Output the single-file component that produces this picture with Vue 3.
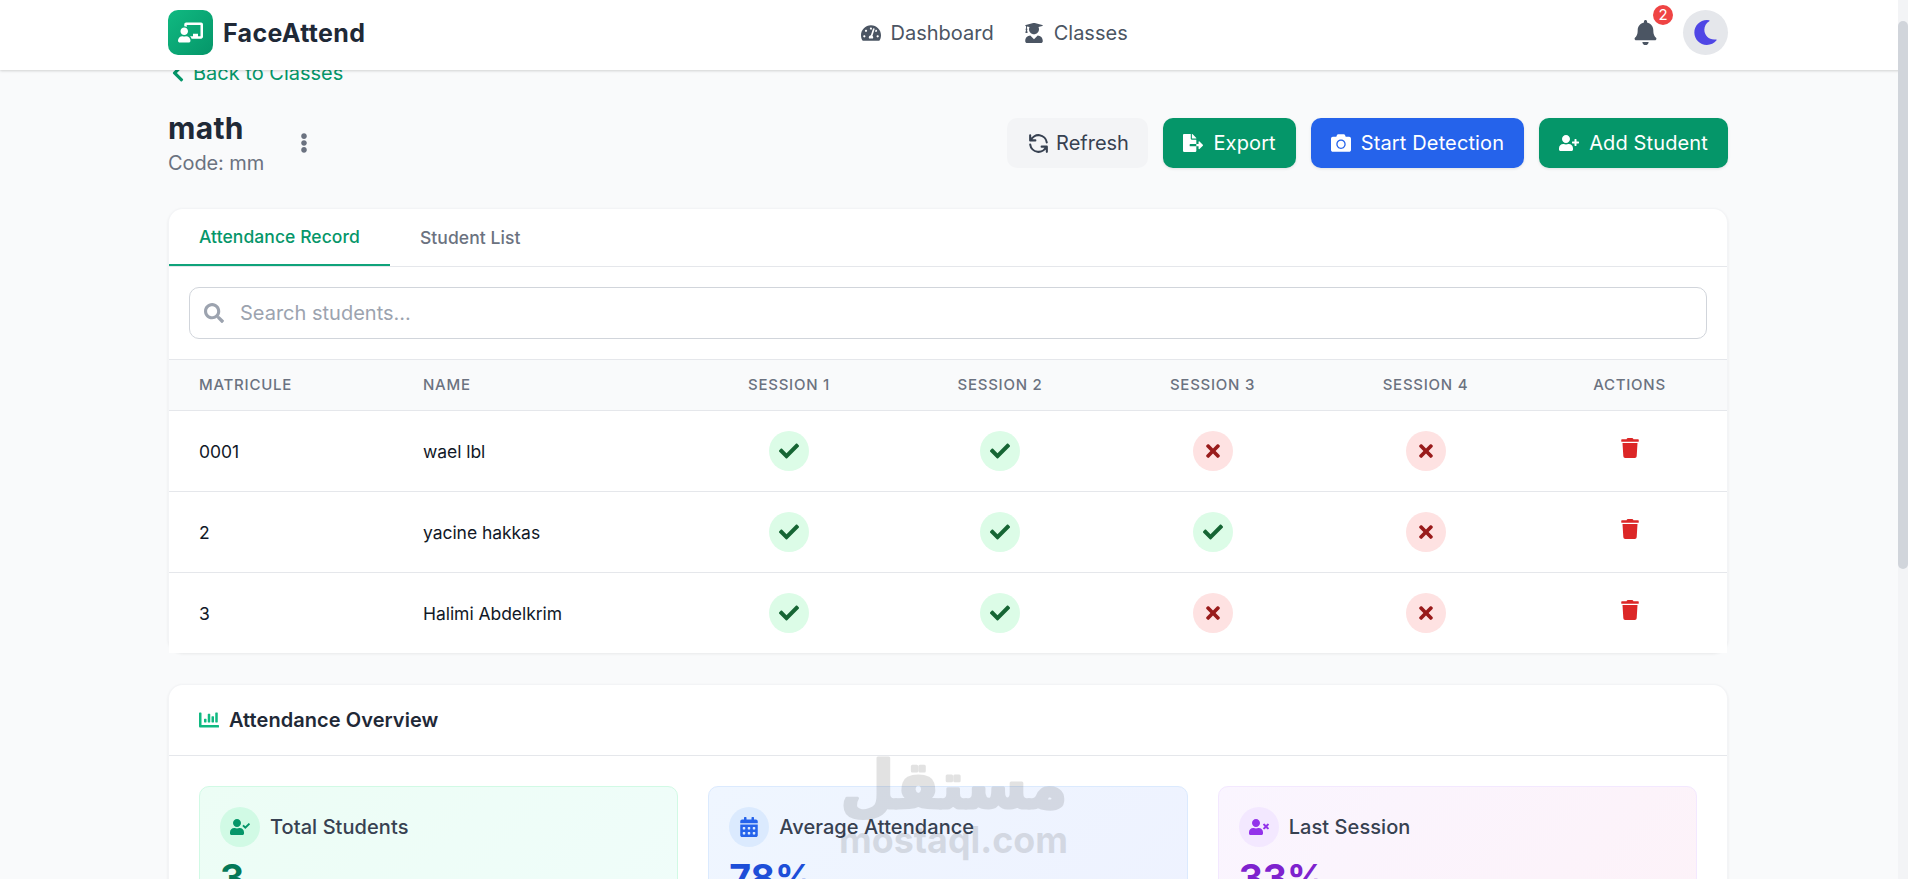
<template>
  <div class="page">
    <header class="navbar">
      <div class="navbar-inner">
        <div class="brand">
          <div class="brand-logo"><Icon name="chalkboard" class="icon-lg" /></div>
          <span class="brand-name">FaceAttend</span>
        </div>

        <nav class="nav-links">
          <a v-for="link in navLinks" :key="link.label" class="nav-link">
            <Icon :name="link.icon" />
            <span>{{ link.label }}</span>
          </a>
        </nav>

        <div class="nav-actions">
          <button class="bell-btn">
            <Icon name="bell" class="icon-lg" />
            <span class="badge">{{ notifications }}</span>
          </button>
          <button class="theme-btn"><Icon name="moon" class="icon-lg" /></button>
        </div>
      </div>
    </header>

    <main class="container">
      <a class="back-link"><Icon name="chevronLeft" /><span>Back to Classes</span></a>

      <div class="title-row">
        <div class="title-left">
          <div>
            <h1>{{ course.name }}</h1>
            <p class="code">Code: {{ course.code }}</p>
          </div>
          <button class="dots-btn"><Icon name="dots" /></button>
        </div>

        <div class="actions">
          <button class="btn btn-refresh">
            <svg class="refresh-icon" viewBox="0 0 24 24" fill="none" stroke="currentColor" stroke-width="2">
              <path
                stroke-linecap="round"
                stroke-linejoin="round"
                d="M4 4v5h.582m15.356 2A8.001 8.001 0 004.582 9m0 0H9m11 11v-5h-.581m0 0a8.003 8.003 0 01-15.357-2m15.357 2H15"
              />
            </svg>
            <span>Refresh</span>
          </button>
          <button class="btn btn-green"><Icon name="fileExport" /><span>Export</span></button>
          <button class="btn btn-blue"><Icon name="camera" /><span>Start Detection</span></button>
          <button class="btn btn-green"><Icon name="userPlus" /><span>Add Student</span></button>
        </div>
      </div>

      <!-- Attendance table -->
      <section class="card">
        <div class="tabs">
          <button
            v-for="tab in tabs"
            :key="tab"
            class="tab"
            :class="{ active: tab === activeTab }"
            @click="activeTab = tab"
          >
            {{ tab }}
          </button>
        </div>

        <div class="search-area">
          <label class="search-box">
            <Icon name="search" />
            <input v-model="query" type="text" placeholder="Search students..." />
          </label>
        </div>

        <table class="records">
          <colgroup>
            <col class="col-id" />
            <col class="col-name" />
            <col v-for="n in 4" :key="n" :class="'col-s' + n" />
            <col />
          </colgroup>
          <thead>
            <tr>
              <th class="left">Matricule</th>
              <th class="left">Name</th>
              <th v-for="n in 4" :key="n">Session {{ n }}</th>
              <th>Actions</th>
            </tr>
          </thead>
          <tbody>
            <tr v-for="student in filteredStudents" :key="student.id">
              <td class="left">{{ student.id }}</td>
              <td class="left">{{ student.name }}</td>
              <td v-for="(present, i) in student.sessions" :key="i">
                <span class="mark" :class="present ? 'present' : 'absent'">
                  <Icon :name="present ? 'check' : 'times'" />
                </span>
              </td>
              <td>
                <button class="delete-btn"><Icon name="trash" /></button>
              </td>
            </tr>
          </tbody>
        </table>
      </section>

      <!-- Overview -->
      <section class="card overview">
        <div class="overview-header">
          <Icon name="chartBar" />
          <h2>Attendance Overview</h2>
        </div>
        <div class="stats">
          <div v-for="stat in stats" :key="stat.label" class="stat" :class="stat.theme">
            <div class="stat-head">
              <span class="stat-icon"><Icon :name="stat.icon" /></span>
              <span class="stat-label">{{ stat.label }}</span>
            </div>
            <div class="stat-value">{{ stat.value }}</div>
          </div>
        </div>
      </section>
    </main>

    <svg class="watermark" viewBox="0 0 240 120">
      <text
        class="wm-ar"
        x="121"
        y="57"
        text-anchor="middle"
        textLength="227"
        lengthAdjust="spacingAndGlyphs"
        direction="rtl"
      >مستقل</text>
      <text class="wm-en" x="6" y="102" textLength="229" lengthAdjust="spacingAndGlyphs">mostaql.com</text>
    </svg>

    <div class="scrollbar"><div class="thumb"></div></div>
  </div>
</template>

<script setup>
import { ref, computed, h } from 'vue'

const person =
  'M224 256c70.7 0 128-57.3 128-128S294.7 0 224 0 96 57.3 96 128s57.3 128 128 128zm89.6 32h-16.7c-22.2 10.2-46.9 16-72.9 16s-50.6-5.8-72.9-16h-16.7C60.2 288 0 348.2 0 422.4V464c0 26.5 21.5 48 48 48h352c26.5 0 48-21.5 48-48v-41.6c0-74.2-60.2-134.4-134.4-134.4z'

// name: [viewBox width, path], every icon is 512 high
const icons = {
  chalkboard: [640, 'M208 352c-2.39 0-4.78.35-7.06 1.09C187.98 357.3 174.35 360 160 360c-14.35 0-27.98-2.7-40.95-6.91-2.28-.74-4.66-1.09-7.05-1.09C49.94 352-.33 402.48 0 464.62.14 490.88 21.73 512 48 512h224c26.27 0 47.86-21.12 48-47.38.33-62.14-49.94-112.62-112-112.62zm-48-32c53.02 0 96-42.98 96-96s-42.98-96-96-96-96 42.98-96 96 42.98 96 96 96zM592 0H208c-26.47 0-48 22.25-48 49.59V96c23.42 0 45.1 6.78 64 17.8V64h352v288h-64v-64H384v64h-76.24c19.1 16.69 33.12 38.73 39.69 64H592c26.47 0 48-22.25 48-49.59V49.59C640 22.25 618.47 0 592 0z'],
  gauge: [576, 'M288 32C128.94 32 0 160.94 0 320c0 52.8 14.25 102.26 39.06 144.8 5.61 9.62 16.3 15.2 27.44 15.2h443c11.14 0 21.83-5.58 27.44-15.2C561.75 422.26 576 372.8 576 320c0-159.06-128.94-288-288-288zm0 64c14.71 0 26.58 10.13 30.32 23.65-1.11 2.26-2.64 4.23-3.45 6.67l-9.22 27.67c-5.13 3.49-10.97 6.01-17.64 6.01-17.67 0-32-14.33-32-32S270.33 96 288 96zM96 384c-17.67 0-32-14.33-32-32s14.33-32 32-32 32 14.33 32 32-14.33 32-32 32zm48-160c-17.67 0-32-14.33-32-32s14.33-32 32-32 32 14.33 32 32-14.33 32-32 32zm246.77-72.41l-61.33 184C343.13 347.33 352 364.54 352 384c0 11.72-3.38 22.55-8.88 32H232.88c-5.5-9.45-8.88-20.28-8.88-32 0-33.94 26.5-61.43 59.9-63.59l61.34-184.01c4.17-12.56 17.73-19.45 30.36-15.17 12.57 4.19 19.35 17.79 15.17 30.36zm14.66 57.2l15.52-46.55c3.47-1.29 7.13-2.23 11.05-2.23 17.67 0 32 14.33 32 32s-14.33 32-32 32c-11.38-.01-20.89-6.28-26.57-15.22zM480 384c-17.67 0-32-14.33-32-32s14.33-32 32-32 32 14.33 32 32-14.33 32-32 32z'],
  graduate: [448, 'M319.4 320.6L224 416l-95.4-95.4C57.1 323.7 0 382.2 0 454.4v9.6c0 26.5 21.5 48 48 48h352c26.5 0 48-21.5 48-48v-9.6c0-72.2-57.1-130.7-128.6-133.8zM13.6 79.8l6.4 1.5v58.4c-7 4.2-12 11.5-12 20.3 0 8.4 4.6 15.4 11.1 19.7L3.5 242c-1.7 6.9 2.1 14 7.6 14h41.8c5.5 0 9.3-7.1 7.6-14l-15.6-62.3C51.4 175.4 56 168.4 56 160c0-8.8-5-16.1-12-20.3V87.1l66 15.9c-8.6 17.2-14 36.4-14 57 0 70.7 57.3 128 128 128s128-57.3 128-128c0-20.6-5.3-39.8-14-57l96.3-23.2c18.2-4.4 18.2-27.1 0-31.5l-190.4-46c-13-3.1-26.7-3.1-39.7 0L13.6 48.2c-18.1 4.4-18.1 27.2 0 31.6z'],
  bell: [448, 'M224 512c35.32 0 63.97-28.65 63.97-64H160.03c0 35.35 28.65 64 63.97 64zm215.39-149.71c-19.32-20.76-55.47-51.99-55.47-154.29 0-77.7-54.48-139.9-127.94-155.16V32c0-17.67-14.32-32-31.98-32s-31.98 14.33-31.98 32v20.84C118.56 68.1 64.08 130.3 64.08 208c0 102.3-36.15 133.53-55.47 154.29-6 6.45-8.66 14.16-8.61 21.71.11 16.4 12.98 32 32.1 32h383.8c19.12 0 32-15.6 32.1-32 .05-7.55-2.61-15.27-8.61-21.71z'],
  moon: [512, 'M283.211 512c78.962 0 151.079-35.925 198.857-94.792 7.068-8.708-.639-21.43-11.562-19.35-124.203 23.654-238.262-71.576-238.262-196.954 0-72.222 38.662-138.635 101.498-174.394 9.686-5.512 7.25-20.197-3.756-22.23A258.156 258.156 0 0 0 283.211 0c-141.309 0-256 114.511-256 256 0 141.309 114.511 256 256 256z'],
  chevronLeft: [320, 'M34.52 239.03L228.87 44.69c9.37-9.37 24.57-9.37 33.94 0l22.67 22.67c9.36 9.36 9.37 24.52.04 33.9L131.49 256l154.02 154.75c9.34 9.38 9.32 24.54-.04 33.9l-22.67 22.67c-9.37 9.37-24.57 9.37-33.94 0L34.52 272.97c-9.37-9.37-9.37-24.57 0-33.94z'],
  dots: [192, 'M96 184c39.8 0 72 32.2 72 72s-32.2 72-72 72-72-32.2-72-72 32.2-72 72-72zM24 80c0 39.8 32.2 72 72 72s72-32.2 72-72S135.8 8 96 8 24 40.2 24 80zm0 352c0 39.8 32.2 72 72 72s72-32.2 72-72-32.2-72-72-72-72 32.2-72 72z'],
  fileExport: [576, 'M384 121.9c0-6.3-2.5-12.4-7-16.9L279.1 7c-4.5-4.5-10.6-7-17-7H256v128h128zM571 308l-95.7-96.4c-10.1-10.1-27.4-3-27.4 11.3V288h-64v64h64v65.2c0 14.3 17.3 21.4 27.4 11.3L571 332c6.6-6.6 6.6-17.4 0-24zm-379 28v-32c0-8.8 7.2-16 16-16h176V160H248c-13.2 0-24-10.8-24-24V0H24C10.7 0 0 10.7 0 24v464c0 13.3 10.7 24 24 24h336c13.3 0 24-10.7 24-24V352H208c-8.8 0-16-7.2-16-16z'],
  camera: [512, 'M512 144v288c0 26.5-21.5 48-48 48H48c-26.5 0-48-21.5-48-48V144c0-26.5 21.5-48 48-48h88l12.3-32.9c7-18.7 24.9-31.1 44.9-31.1h125.5c20 0 37.9 12.4 44.9 31.1L376 96h88c26.5 0 48 21.5 48 48zM376 288c0-66.2-53.8-120-120-120s-120 53.8-120 120 53.8 120 120 120 120-53.8 120-120zm-32 0c0 48.5-39.5 88-88 88s-88-39.5-88-88 39.5-88 88-88 88 39.5 88 88z'],
  userPlus: [640, person + 'M624 208h-64v-64c0-8.8-7.2-16-16-16h-32c-8.8 0-16 7.2-16 16v64h-64c-8.8 0-16 7.2-16 16v32c0 8.8 7.2 16 16 16h64v64c0 8.8 7.2 16 16 16h32c8.8 0 16-7.2 16-16v-64h64c8.8 0 16-7.2 16-16v-32c0-8.8-7.2-16-16-16z'],
  userCheck: [640, person + 'M636.6 159.4l-27.2-27.4c-4.5-4.6-11.9-4.6-16.4 0L490.2 234.9l-44.6-45c-4.5-4.6-11.9-4.6-16.4 0L402 217.1c-4.5 4.6-4.5 11.9.1 16.5l79.8 80.3c4.5 4.6 11.9 4.6 16.5 0l138.1-138.1c4.5-4.6 4.5-11.9.1-16.4z'],
  userTimes: [640, person + 'M589.6 240l45.6-45.6c6.3-6.3 6.3-16.5 0-22.8l-22.8-22.8c-6.3-6.3-16.5-6.3-22.8 0L544 194.4l-45.6-45.6c-6.3-6.3-16.5-6.3-22.8 0l-22.8 22.8c-6.3 6.3-6.3 16.5 0 22.8l45.6 45.6-45.6 45.6c-6.3 6.3-6.3 16.5 0 22.8l22.8 22.8c6.3 6.3 16.5 6.3 22.8 0l45.6-45.6 45.6 45.6c6.3 6.3 16.5 6.3 22.8 0l22.8-22.8c6.3-6.3 6.3-16.5 0-22.8z'],
  search: [512, 'M505 442.7L405.3 343c-4.5-4.5-10.6-7-17-7H372c27.6-35.3 44-79.7 44-128C416 93.1 322.9 0 208 0S0 93.1 0 208s93.1 208 208 208c48.3 0 92.7-16.4 128-44v16.3c0 6.4 2.5 12.5 7 17l99.7 99.7c9.4 9.4 24.6 9.4 33.9 0l28.3-28.3c9.4-9.4 9.4-24.6.1-34zM208 336c-70.7 0-128-57.2-128-128 0-70.7 57.2-128 128-128 70.7 0 128 57.2 128 128 0 70.7-57.2 128-128 128z'],
  check: [512, 'M173.898 439.404l-166.4-166.4c-9.997-9.997-9.997-26.206 0-36.204l36.203-36.204c9.997-9.998 26.207-9.998 36.204 0L192 312.69 432.095 72.596c9.997-9.997 26.207-9.997 36.204 0l36.203 36.204c9.997 9.997 9.997 26.206 0 36.204l-294.4 294.401c-9.998 9.997-26.207 9.997-36.204-.001z'],
  times: [352, 'M242.72 256l100.07-100.07c12.28-12.28 12.28-32.19 0-44.48l-22.24-22.24c-12.28-12.28-32.19-12.28-44.48 0L176 189.28 75.93 89.21c-12.28-12.28-32.19-12.28-44.48 0L9.21 111.45c-12.28 12.28-12.28 32.19 0 44.48L109.28 256 9.21 356.07c-12.28 12.28-12.28 32.19 0 44.48l22.24 22.24c12.28 12.28 32.2 12.28 44.48 0L176 322.72l100.07 100.07c12.28 12.28 32.2 12.28 44.48 0l22.24-22.24c12.28-12.28 12.28-32.19 0-44.48L242.72 256z'],
  trash: [448, 'M432 32H312l-9.4-18.7A24 24 0 0 0 281.1 0H166.8a23.72 23.72 0 0 0-21.4 13.3L136 32H16A16 16 0 0 0 0 48v32a16 16 0 0 0 16 16h416a16 16 0 0 0 16-16V48a16 16 0 0 0-16-16zM53.2 467a48 48 0 0 0 47.9 45h245.8a48 48 0 0 0 47.9-45L416 128H32z'],
  chartBar: [512, 'M332.8 320h38.4c6.4 0 12.8-6.4 12.8-12.8V172.8c0-6.4-6.4-12.8-12.8-12.8h-38.4c-6.4 0-12.8 6.4-12.8 12.8v134.4c0 6.4 6.4 12.8 12.8 12.8zm96 0h38.4c6.4 0 12.8-6.4 12.8-12.8V76.8c0-6.4-6.4-12.8-12.8-12.8h-38.4c-6.4 0-12.8 6.4-12.8 12.8v230.4c0 6.4 6.4 12.8 12.8 12.8zm-288 0h38.4c6.4 0 12.8-6.4 12.8-12.8v-70.4c0-6.4-6.4-12.8-12.8-12.8h-38.4c-6.4 0-12.8 6.4-12.8 12.8v70.4c0 6.4 6.4 12.8 12.8 12.8zm96 0h38.4c6.4 0 12.8-6.4 12.8-12.8V108.8c0-6.4-6.4-12.8-12.8-12.8h-38.4c-6.4 0-12.8 6.4-12.8 12.8v198.4c0 6.4 6.4 12.8 12.8 12.8zM496 384H64V80c0-8.84-7.16-16-16-16H16C7.16 64 0 71.16 0 80v336c0 17.67 14.33 32 32 32h464c8.84 0 16-7.16 16-16v-32c0-8.84-7.16-16-16-16z'],
  calendar: [448, 'M0 464c0 26.5 21.5 48 48 48h352c26.5 0 48-21.5 48-48V192H0v272z' +
    [64, 192, 320].map((x) => [256, 384].map((y) => `M${x} ${y + 12}v40c0 6.6 5.4 12 12 12h40c6.6 0 12-5.4 12-12v-40c0-6.6-5.4-12-12-12h-40c-6.6 0-12 5.4-12 12z`).join('')).join('') +
    'M400 64h-48V16c0-8.8-7.2-16-16-16h-32c-8.8 0-16 7.2-16 16v48H160V16c0-8.8-7.2-16-16-16h-32c-8.8 0-16 7.2-16 16v48H48C21.5 64 0 85.5 0 112v48h448v-48c0-26.5-21.5-48-48-48z']
}

const Icon = (props) =>
  h('svg', { viewBox: `0 0 ${icons[props.name][0]} 512`, width: '1em', height: '1em', fill: 'currentColor' }, [
    h('path', { d: icons[props.name][1], 'fill-rule': props.name === 'calendar' ? 'evenodd' : 'nonzero' })
  ])
Icon.props = ['name']

const navLinks = [
  { label: 'Dashboard', icon: 'gauge' },
  { label: 'Classes', icon: 'graduate' }
]
const notifications = ref(2)
const course = { name: 'math', code: 'mm' }

const tabs = ['Attendance Record', 'Student List']
const activeTab = ref('Attendance Record')
const query = ref('')

const students = ref([
  { id: '0001', name: 'wael lbl', sessions: [true, true, false, false] },
  { id: '2', name: 'yacine hakkas', sessions: [true, true, true, false] },
  { id: '3', name: 'Halimi Abdelkrim', sessions: [true, true, false, false] }
])

const filteredStudents = computed(() =>
  students.value.filter((s) => s.name.toLowerCase().includes(query.value.toLowerCase()))
)

const stats = [
  { label: 'Total Students', value: '3', icon: 'userCheck', theme: 'green' },
  { label: 'Average Attendance', value: '78%', icon: 'calendar', theme: 'blue' },
  { label: 'Last Session', value: '33%', icon: 'userTimes', theme: 'purple' }
]
</script>

<style>
body {
  margin: 0;
  overflow: hidden;
  background: #f9fafb;
}
</style>

<style scoped>
.page {
  position: relative;
  height: 879px;
  overflow: hidden;
  background: #f9fafb;
  color: #1f2937;
  font-family: Inter, 'Liberation Sans', sans-serif;
  font-size: 20px;
  line-height: 30px;
}

.page * {
  box-sizing: border-box;
}

svg {
  flex-shrink: 0;
}

button {
  border: none;
  padding: 0;
  background: none;
  color: inherit;
  font: inherit;
  cursor: pointer;
}

h1,
h2,
p {
  margin: 0;
}

.icon-lg {
  font-size: 25px;
}

/* Navbar */
.navbar {
  position: relative;
  z-index: 10;
  height: 70px;
  background: #fff;
  box-shadow: 0 1px 3px rgba(0, 0, 0, 0.12), 0 1px 2px rgba(0, 0, 0, 0.05);
}

.navbar-inner {
  width: 1560px;
  height: 65px;
  margin-left: 168px;
  display: flex;
  align-items: center;
  justify-content: space-between;
}

.brand {
  display: flex;
  align-items: center;
  gap: 10px;
}

.brand-logo {
  width: 45px;
  height: 45px;
  border-radius: 10px;
  display: flex;
  align-items: center;
  justify-content: center;
  color: #fff;
  background: linear-gradient(135deg, #10b981, #059669);
}

.brand-name {
  font-size: 25px;
  font-weight: 700;
  letter-spacing: 0.33px;
}

.nav-links {
  display: flex;
  gap: 30px;
}

.nav-link {
  display: flex;
  align-items: center;
  gap: 10px;
  color: #4b5563;
}

.nav-actions {
  display: flex;
  gap: 15px;
}

.bell-btn,
.theme-btn {
  position: relative;
  width: 45px;
  height: 45px;
  display: flex;
  align-items: center;
  justify-content: center;
  color: #4b5563;
}

.theme-btn {
  border-radius: 50%;
  background: #e5e7eb;
  color: #4f46e5;
}

.badge {
  position: absolute;
  top: -5px;
  right: -5px;
  width: 20px;
  height: 20px;
  border-radius: 50%;
  background: #ef4444;
  color: #fff;
  font-size: 15px;
  line-height: 20px;
  text-align: center;
}

/* Page heading */
.container {
  width: 1560px;
  margin: -12px 0 0 168px;
}

.back-link {
  display: flex;
  align-items: center;
  gap: 5px;
  height: 30px;
  margin-bottom: 20px;
  color: #059669;
}

.title-row {
  display: flex;
  align-items: center;
  justify-content: space-between;
  height: 70px;
  margin-bottom: 30px;
}

.title-left {
  display: flex;
  align-items: center;
  gap: 20px;
}

h1 {
  font-size: 30px;
  line-height: 40px;
  font-weight: 700;
  letter-spacing: 0.3px;
}

.code {
  color: #6b7280;
  letter-spacing: -0.1px;
}

.dots-btn {
  width: 40px;
  height: 40px;
  display: flex;
  align-items: center;
  justify-content: center;
  color: #6b7280;
}

.actions {
  display: flex;
  gap: 15px;
}

.btn {
  height: 50px;
  padding: 0 20px;
  border-radius: 10px;
  display: flex;
  align-items: center;
  gap: 10px;
  color: #fff;
  letter-spacing: 0.13px;
  box-shadow: 0 1px 3px rgba(0, 0, 0, 0.1);
}

.btn-refresh {
  gap: 5px;
  padding: 0 19.5px 0 19px;
  background: #f3f4f6;
  color: #374151;
  letter-spacing: 0;
  box-shadow: none;
}

.refresh-icon {
  width: 25px;
  height: 25px;
}

.btn-green {
  background: #059669;
}

.btn-blue {
  background: #2563eb;
}

/* Cards */
.card {
  border: 1px solid #f3f4f6;
  border-bottom: none;
  border-radius: 15px;
  background: #fff;
  box-shadow: 0 1px 3px rgba(0, 0, 0, 0.07);
}

.tabs {
  display: flex;
  height: 58px;
  border-bottom: 1px solid #e5e7eb;
}

.tab {
  padding: 0 30px;
  font-size: 17.5px;
  font-weight: 500;
  letter-spacing: 0.07px;
  color: #6b7280;
}

.tab.active {
  color: #059669;
  border-bottom: 2px solid #10a37a;
}

.search-area {
  padding: 20px;
}

.search-box {
  height: 52px;
  padding: 0 14px;
  border: 1px solid #d1d5db;
  border-radius: 10px;
  display: flex;
  align-items: center;
  gap: 16px;
  color: #9ca3af;
}

.search-box input {
  flex: 1;
  border: none;
  outline: none;
  padding: 0;
  background: none;
  color: #1f2937;
  font: inherit;
}

.search-box input::placeholder {
  color: #9ca3af;
  opacity: 1;
}

.records {
  width: 100%;
  table-layout: fixed;
  border-collapse: separate;
  border-spacing: 0;
  background: #fff;
}

.col-id {
  width: 224px;
}

.col-name {
  width: 291px;
}

.col-s1 {
  width: 210px;
}

.col-s2 {
  width: 212px;
}

.col-s3,
.col-s4 {
  width: 213px;
}

.records th,
.records td {
  padding: 0 30px;
  text-align: center;
}

.records .left {
  text-align: left;
}

.records th {
  height: 52px;
  border-top: 1px solid #e5e7eb;
  border-bottom: 1px solid #e5e7eb;
  background: #f9fafb;
  color: #6b7280;
  font-size: 15px;
  font-weight: 500;
  letter-spacing: 0.75px;
  text-transform: uppercase;
}

.records td {
  height: 81px;
  border-bottom: 1px solid #e5e7eb;
  color: #111827;
  font-size: 17.5px;
  letter-spacing: -0.05px;
}

.records td.left {
  padding-top: 2px;
}

.records tbody tr:last-child td {
  height: 80px;
  border-bottom: none;
}

.mark {
  width: 40px;
  height: 40px;
  margin: 0 auto;
  border-radius: 50%;
  display: flex;
  align-items: center;
  justify-content: center;
  font-size: 20px;
}

.present {
  background: #dcfce7;
  color: #166534;
}

.absent {
  background: #fee2e2;
  color: #991b1b;
}

.delete-btn {
  display: block;
  height: 26px;
  margin: 0 auto;
  font-size: 20px;
  line-height: 0;
  color: #dc2626;
}

.delete-btn svg {
  display: block;
  margin-bottom: 6px;
}

/* Overview */
.overview {
  margin-top: 31px;
}

.overview-header {
  height: 71px;
  padding: 0 30px;
  border-bottom: 1px solid #e5e7eb;
  display: flex;
  align-items: center;
  gap: 10px;
  color: #10b981;
}

.overview-header h2 {
  color: #1f2937;
  font-size: 20px;
  font-weight: 600;
  letter-spacing: 0.06px;
}

.stats {
  display: grid;
  grid-template-columns: repeat(3, 1fr);
  gap: 30px;
  padding: 30px;
}

.stat {
  height: 150px;
  padding: 20px;
  border: 1px solid #d1fae5;
  border-radius: 10px;
}

.stat-head {
  display: flex;
  align-items: center;
  gap: 10px;
  margin-bottom: 6px;
}

.stat-icon {
  width: 40px;
  height: 40px;
  border-radius: 50%;
  display: flex;
  align-items: center;
  justify-content: center;
}

.stat-label {
  color: #374151;
  font-weight: 500;
  letter-spacing: 0.07px;
}

.stat-value {
  font-size: 37.5px;
  line-height: 50px;
  font-weight: 700;
}

.green {
  background: linear-gradient(135deg, #ecfdf5, #f0fdfa);
}

.green .stat-icon {
  background: #d1fae5;
  color: #059669;
}

.green .stat-value {
  color: #047857;
}

.blue {
  background: linear-gradient(135deg, #eff6ff, #eef2ff);
  border-color: #dbeafe;
}

.blue .stat-icon {
  background: #dbeafe;
  color: #2563eb;
}

.blue .stat-value {
  color: #1d4ed8;
}

.purple {
  background: linear-gradient(135deg, #faf5ff, #fdf2f8);
  border-color: #f3e8ff;
}

.purple .stat-icon {
  background: #f3e8ff;
  color: #9333ea;
}

.purple .stat-value {
  color: #7e22ce;
}

/* Overlays */
.watermark {
  position: absolute;
  left: 833px;
  top: 751px;
  width: 240px;
  height: 120px;
  overflow: visible;
  opacity: 0.11;
  pointer-events: none;
}

.wm-ar {
  font: 700 66px 'DejaVu Sans', sans-serif;
  stroke: #000;
  stroke-width: 3;
  stroke-linejoin: round;
}

.wm-en {
  font: 700 37px Inter, sans-serif;
}

.scrollbar {
  position: absolute;
  top: 0;
  right: 0;
  width: 10px;
  height: 879px;
  padding-top: 21px;
  background: #f3f4f6;
  z-index: 20;
}

.thumb {
  height: 548px;
  border-radius: 5px;
  background: #d1d5db;
}
</style>
